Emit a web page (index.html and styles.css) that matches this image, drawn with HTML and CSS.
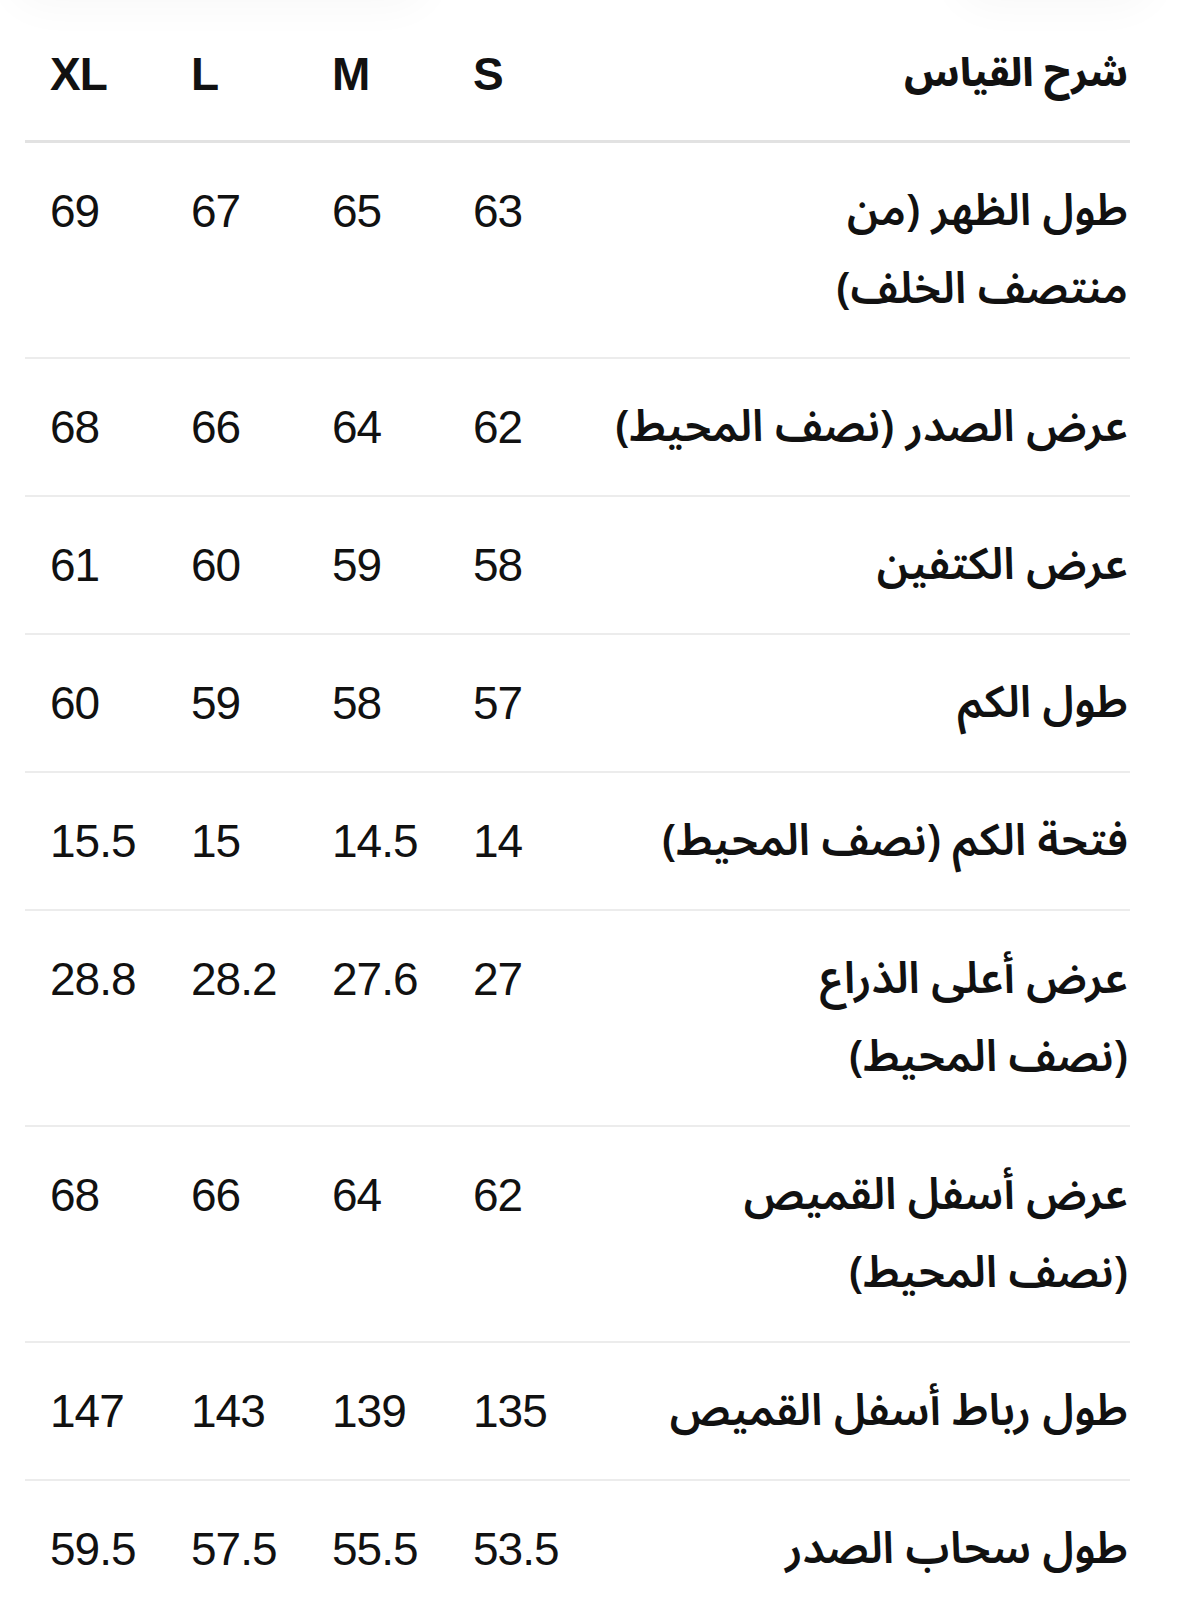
FILE: index.html
```html
<!DOCTYPE html>
<html lang="ar">
<head>
<meta charset="utf-8">
<title>جدول المقاسات</title>
<link rel="stylesheet" href="styles.css">
</head>
<body>
<div class="page">
  <div class="top-shade top-shade-left"></div>
  <div class="top-shade top-shade-right"></div>
  <div class="size-table" dir="rtl">
    <div class="row head">
      <div class="label">شرح القياس</div>
      <div class="num">S</div>
      <div class="num">M</div>
      <div class="num">L</div>
      <div class="num">XL</div>
    </div>
    <div class="row">
      <div class="label"><span class="line">طول الظهر (من</span><span class="line">منتصف الخلف)</span></div>
      <div class="num">63</div>
      <div class="num">65</div>
      <div class="num">67</div>
      <div class="num">69</div>
    </div>
    <div class="row">
      <div class="label">عرض الصدر (نصف المحيط)</div>
      <div class="num">62</div>
      <div class="num">64</div>
      <div class="num">66</div>
      <div class="num">68</div>
    </div>
    <div class="row">
      <div class="label">عرض الكتفين</div>
      <div class="num">58</div>
      <div class="num">59</div>
      <div class="num">60</div>
      <div class="num">61</div>
    </div>
    <div class="row">
      <div class="label">طول الكم</div>
      <div class="num">57</div>
      <div class="num">58</div>
      <div class="num">59</div>
      <div class="num">60</div>
    </div>
    <div class="row">
      <div class="label">فتحة الكم (نصف المحيط)</div>
      <div class="num">14</div>
      <div class="num">14.5</div>
      <div class="num">15</div>
      <div class="num">15.5</div>
    </div>
    <div class="row">
      <div class="label"><span class="line">عرض أعلى الذراع</span><span class="line">(نصف المحيط)</span></div>
      <div class="num">27</div>
      <div class="num">27.6</div>
      <div class="num">28.2</div>
      <div class="num">28.8</div>
    </div>
    <div class="row">
      <div class="label"><span class="line">عرض أسفل القميص</span><span class="line">(نصف المحيط)</span></div>
      <div class="num">62</div>
      <div class="num">64</div>
      <div class="num">66</div>
      <div class="num">68</div>
    </div>
    <div class="row">
      <div class="label">طول رباط أسفل القميص</div>
      <div class="num">135</div>
      <div class="num">139</div>
      <div class="num">143</div>
      <div class="num">147</div>
    </div>
    <div class="row last">
      <div class="label">طول سحاب الصدر</div>
      <div class="num">53.5</div>
      <div class="num">55.5</div>
      <div class="num">57.5</div>
      <div class="num">59.5</div>
    </div>
  </div>
</div>
</body>
</html>
```

FILE: styles.css
```css
html, body {
  margin: 0;
  padding: 0;
  background: #ffffff;
}

.page {
  position: relative;
  width: 1179px;
  min-height: 1603px;
  overflow: hidden;
  color: #111111;
}

.top-shade {
  position: absolute;
  top: -70px;
  height: 70px;
  border-radius: 40px;
  background: #ffffff;
  box-shadow: 0 8px 40px rgba(0, 0, 0, 0.03);
}

.top-shade-left {
  left: 10px;
  width: 420px;
}

.top-shade-right {
  left: 955px;
  width: 200px;
}

.size-table {
  margin: 0 49px 0 25px;
  width: 1105px;
}

.row {
  display: grid;
  grid-template-columns: minmax(0, 1fr) 141px 141px 141px 141px;
  padding: 29px 2px 29px 25px;
  border-bottom: 2px solid #ececec;
  line-height: 78px;
}

.row.head {
  padding-top: 35px;
  padding-bottom: 27px;
  border-bottom: 3px solid #e2e2e2;
}

.row.last {
  border-bottom: none;
}

.label {
  text-align: right;
  white-space: nowrap;
  font-family: "Noto Sans Arabic", "DejaVu Sans", sans-serif;
  font-size: 44px;
  font-weight: 600;
}

.label .line {
  display: block;
  height: 78px;
}

.head .label {
  font-size: 39px;
  font-weight: 800;
}

.num {
  direction: ltr;
  text-align: left;
  font-family: "Liberation Sans", Arial, sans-serif;
  font-size: 46px;
  letter-spacing: -1px;
  font-weight: 400;
}

.head .num {
  font-weight: 700;
}
```
